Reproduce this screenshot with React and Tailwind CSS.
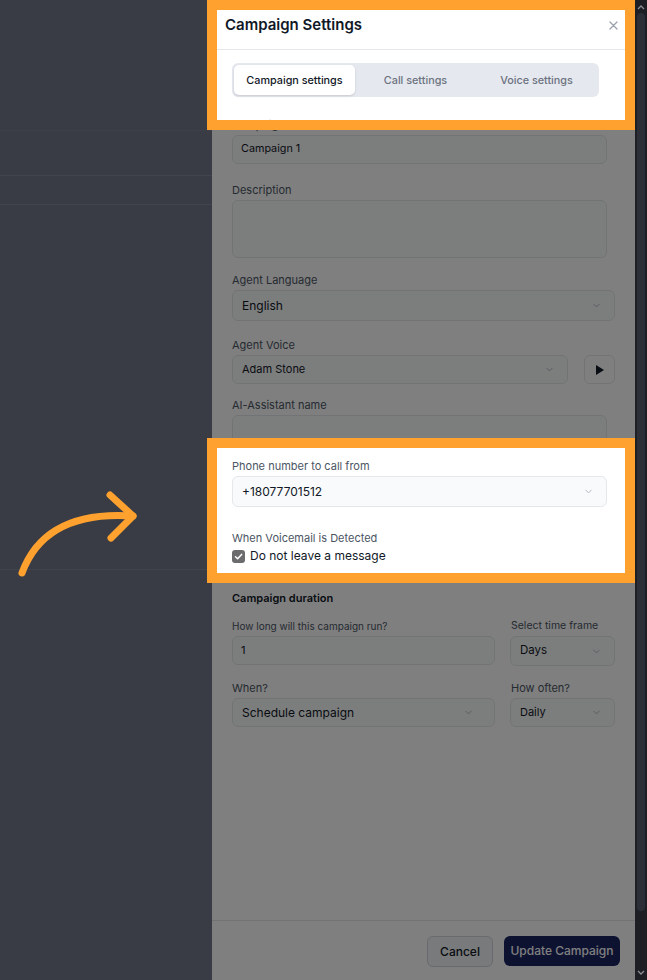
import { ChevronDown } from 'lucide-react';

const labelBase = "block leading-[14px] mb-[3px] text-[#4b5563]";
const inputCls = "h-[29px] rounded-md border border-[#e5e7eb] bg-[#f9fafb] px-[8px] flex items-center text-[#111827]";

const Label = ({ children, className = '', size = 'text-[11px]' }) => (
  <label className={`${labelBase} ${size} ${className}`}>{children}</label>
);

// select-like box with the small chevron on the right
const SelectBox = ({ value, className = '', h = 'h-[31px]', size = 'text-[12px]' }) => (
  <div className={`${h} ${size} rounded-md border border-[#e5e7eb] bg-[#f9fafb] pl-[9px] pr-[12px] flex items-center justify-between text-[#111827] ${className}`}>
    <span>{value}</span>
    <ChevronDown size={11} strokeWidth={1.6} className="text-[#9ca3af]" />
  </div>
);

const Tabs = () => {
  const tabs = ['Campaign settings', 'Call settings', 'Voice settings'];
  return (
    <div className="ml-[20px] mt-[13px] grid h-[34px] w-[367px] grid-cols-3 rounded-md bg-[#e5e8ee] p-[2px]">
      {tabs.map((t, i) => (
        <div
          key={t}
          className={
            i === 0
              ? "flex items-center justify-center rounded-[5px] bg-white pt-[2px] text-[10.8px] font-medium text-[#111827] shadow-sm"
              : "flex items-center justify-center pt-[2px] text-[10.8px] font-medium text-[#6b7280]"
          }
        >
          {t}
        </div>
      ))}
    </div>
  );
};

const SettingsPanel = () => (
  <aside className="relative flex w-[423px] flex-col bg-white">
    {/* header */}
    <div className="flex h-[50px] items-center justify-between border-b border-[#e5e7eb] pl-[13px] pr-[17px] pt-[1px]">
      <h3 className="text-[15px] font-semibold text-[#111827]">Campaign Settings</h3>
      <svg width="9" height="9" viewBox="0 0 9 9" className="text-[#9ca3af]">
        <path d="M1 1l7 7M8 1l-7 7" stroke="currentColor" strokeWidth="1.4" strokeLinecap="round" />
      </svg>
    </div>

    <Tabs />

    <div className="flex flex-col pl-[20px] pr-[20px] pt-[21px]">
      <Label>Campaign name</Label>
      <div className={`${inputCls} mr-[8px] text-[10.8px]`}>Campaign 1</div>

      <Label className="mt-[19px]">Description</Label>
      <div className="mr-[8px] h-[58px] rounded-md border border-[#e5e7eb] bg-[#f9fafb]" />

      <Label className="mt-[15px]">Agent Language</Label>
      <SelectBox value="English" />

      <Label className="mt-[17px]">Agent Voice</Label>
      <div className="flex gap-[16px]">
        <SelectBox value="Adam Stone" h="h-[29px]" size="text-[11px]" className="flex-1" />
        <div className="flex h-[29px] w-[31px] items-center justify-center rounded-md border border-[#e5e7eb] bg-white">
          <svg width="8" height="10" viewBox="0 0 8 10">
            <path d="M0 0L8 5L0 10Z" fill="#111827" />
          </svg>
        </div>
      </div>

      <Label className="mt-[14px]">AI-Assistant name</Label>
      <div className={`${inputCls} mr-[8px]`} />

      <Label className="mt-[15px]">Phone number to call from</Label>
      <SelectBox value="+18077701512" className="mr-[8px]" />

      <Label className="mt-[24px] !mb-[2px]">When Voicemail is Detected</Label>
      <div className="flex h-[18px] items-center gap-[5px]">
        <span className="flex h-[13px] w-[13px] items-center justify-center rounded-[3px] bg-[#6b6b6e]">
          <svg width="9" height="9" viewBox="0 0 9 9">
            <path d="M1.5 4.7L3.6 6.7L7.6 2.4" fill="none" stroke="white" strokeWidth="1.5" strokeLinecap="round" strokeLinejoin="round" />
          </svg>
        </span>
        <span className="text-[12px] text-[#111827]">Do not leave a message</span>
      </div>

      <p className="mt-[26px] text-[11px] font-semibold leading-[14px] text-[#111827]">Campaign duration</p>

      <div className="mt-[14px] flex items-start gap-[15px]">
        <div className="w-[263px]">
          <Label size="text-[10px]">How long will this campaign run?</Label>
          <div className={`${inputCls} h-[28px] text-[11px]`}>1</div>
        </div>
        <div className="flex-1">
          <Label size="text-[10.5px]" className="pl-[1px]">Select time frame</Label>
          <SelectBox value="Days" h="h-[30px]" size="text-[11.5px]" />
        </div>
      </div>

      <div className="mt-[15px] flex items-start gap-[15px]">
        <div className="w-[263px]">
          <Label>When?</Label>
          <SelectBox value="Schedule campaign" h="h-[29px]" className="pr-[20px]" />
        </div>
        <div className="flex-1">
          <Label className="pl-[1px]">How often?</Label>
          <SelectBox value="Daily" h="h-[29px]" size="text-[11px]" />
        </div>
      </div>
    </div>

    {/* footer */}
    <div className="mt-auto flex h-[60px] items-start justify-end gap-[11px] border-t border-[#e5e7eb] pr-[15px] pt-[15px]">
      <button className="h-[31px] w-[66px] rounded-md border border-[#d1d5db] bg-[#f3f4f6] text-[12px] font-medium text-[#111827]">
        Cancel
      </button>
      <button className="h-[30px] w-[116px] rounded-md bg-[#1a2462] text-[12px] font-medium text-white">
        Update Campaign
      </button>
    </div>
  </aside>
);

const Scrollbar = () => (
  <div className="flex w-[12px] flex-col items-center bg-[#1d1f25]">
    <svg width="8" height="6" viewBox="0 0 8 6" className="mt-[4px]">
      <path d="M1 5L4 2L7 5" fill="none" stroke="#8b8e96" strokeWidth="1.3" />
    </svg>
    <div className="mt-[3px] h-[898px] w-[8px] rounded-full bg-[#2c2f37]" />
    <svg width="8" height="6" viewBox="0 0 8 6" className="mt-auto mb-[4px]">
      <path d="M1 1L4 4L7 1" fill="none" stroke="#8b8e96" strokeWidth="1.3" />
    </svg>
  </div>
);

export default function App() {
  return (
    <div className="relative h-[980px] w-[647px] overflow-hidden bg-[#393c45] font-['Inter','Noto_Sans',sans-serif]">
      <div className="flex h-full">
        {/* dimmed page behind the drawer */}
        <div className="relative w-[212px]">
          <div className="h-[131px] border-b border-[#3d4049]" />
          <div className="h-[45px] border-b border-[#40444d]" />
          <div className="h-[29px] border-b border-[#40444d]" />
          <div className="h-[365px] border-b border-[#40444d]" />

          <svg className="absolute left-0 top-[480px]" width="150" height="110" viewBox="0 0 150 110">
            <path d="M22 93 Q45 30 133 36" fill="none" stroke="#ffa12e" strokeWidth="7" strokeLinecap="round" />
            <path d="M110 15L133 36L111 58" fill="none" stroke="#ffa12e" strokeWidth="7" strokeLinecap="round" strokeLinejoin="round" />
          </svg>
        </div>

        <SettingsPanel />
        <Scrollbar />
      </div>

      {/* dim everything in the drawer except the two callouts */}
      <div className="absolute left-[212px] top-[120px] h-[328px] w-[423px] bg-black/50" />
      <div className="absolute bottom-0 left-[212px] top-[573px] w-[423px] bg-black/50" />

      {/* callout frames */}
      <div className="absolute left-[207px] top-0 h-[130px] w-[428px] border-[10px] border-[#ffa12e]" />
      <div className="absolute left-[207px] top-[438px] h-[145px] w-[428px] border-[10px] border-[#ffa12e]" />
    </div>
  );
}
